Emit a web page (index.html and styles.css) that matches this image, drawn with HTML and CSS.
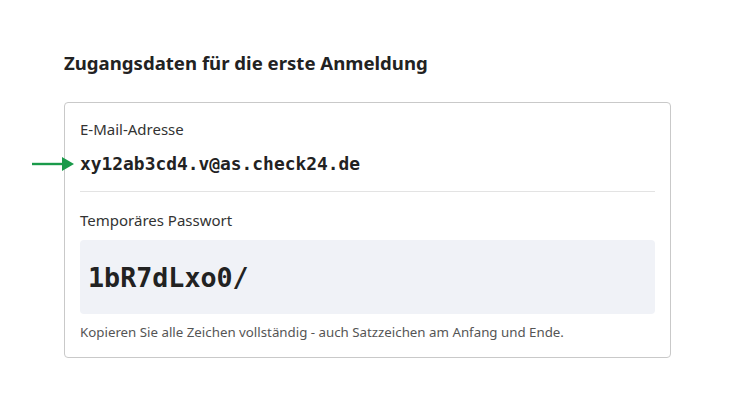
FILE: index.html
```html
<!DOCTYPE html>
<html lang="de">
<head>
<meta charset="utf-8">
<link rel="stylesheet" href="styles.css">
</head>
<body>
<main class="page">
  <h2 class="title">Zugangsdaten für die erste Anmeldung</h2>
  <section class="card">
    <div class="field">
      <div class="label">E-Mail-Adresse</div>
      <div class="email">
        <svg class="arrow" width="44" height="14" viewBox="0 0 44 14"><line x1="0" y1="7" x2="32" y2="7" stroke="#1a9a4a" stroke-width="2.4"/><polygon points="30,0 42,7 30,14" fill="#1a9a4a"/></svg>
        xy12ab3cd4.v@as.check24.de
      </div>
    </div>
    <hr class="divider">
    <div class="field">
      <div class="label">Temporäres Passwort</div>
      <div class="pwbox"><span class="pw">1bR7dLxo0/</span></div>
      <p class="note">Kopieren Sie alle Zeichen vollständig - auch Satzzeichen am Anfang und Ende.</p>
    </div>
  </section>
</main>
</body>
</html>
```
FILE: styles.css
```css
* { box-sizing: border-box; }
body {
  margin: 0;
  background: #fff;
  font-family: "Noto Sans", "Open Sans", sans-serif;
  color: #222;
}
.page {
  padding: 50px 65px 0 64px;
}
.title {
  margin: 0 0 26px;
  font-size: 18.6px;
  font-weight: 700;
  line-height: 26px;
  color: #222;
}
.card {
  border: 1px solid #c9c9c9;
  border-radius: 4px;
  padding: 16px 15px 16px 15px;
}
.label {
  font-size: 15px;
  line-height: 20px;
  color: #333;
}
.email {
  position: relative;
  margin-top: 14px;
  font-family: "DejaVu Sans Mono", monospace;
  font-weight: 700;
  font-size: 17.9px;
  line-height: 22px;
  color: #222;
}
.arrow {
  position: absolute;
  left: -48px;
  top: 4px;
}
.divider {
  border: 0;
  border-top: 1px solid #e3e3e3;
  margin: 16px 0 18px;
}
.pwbox {
  margin-top: 10px;
  background: #f0f2f7;
  border-radius: 4px;
  height: 74px;
  display: flex;
  align-items: center;
  padding: 0 8px;
}
.pw {
  font-family: "DejaVu Sans Mono", monospace;
  font-weight: 700;
  font-size: 26.7px;
  color: #222;
}
.note {
  margin: 10px 0 0;
  font-size: 13.3px;
  line-height: 17px;
  color: #555;
}
```
